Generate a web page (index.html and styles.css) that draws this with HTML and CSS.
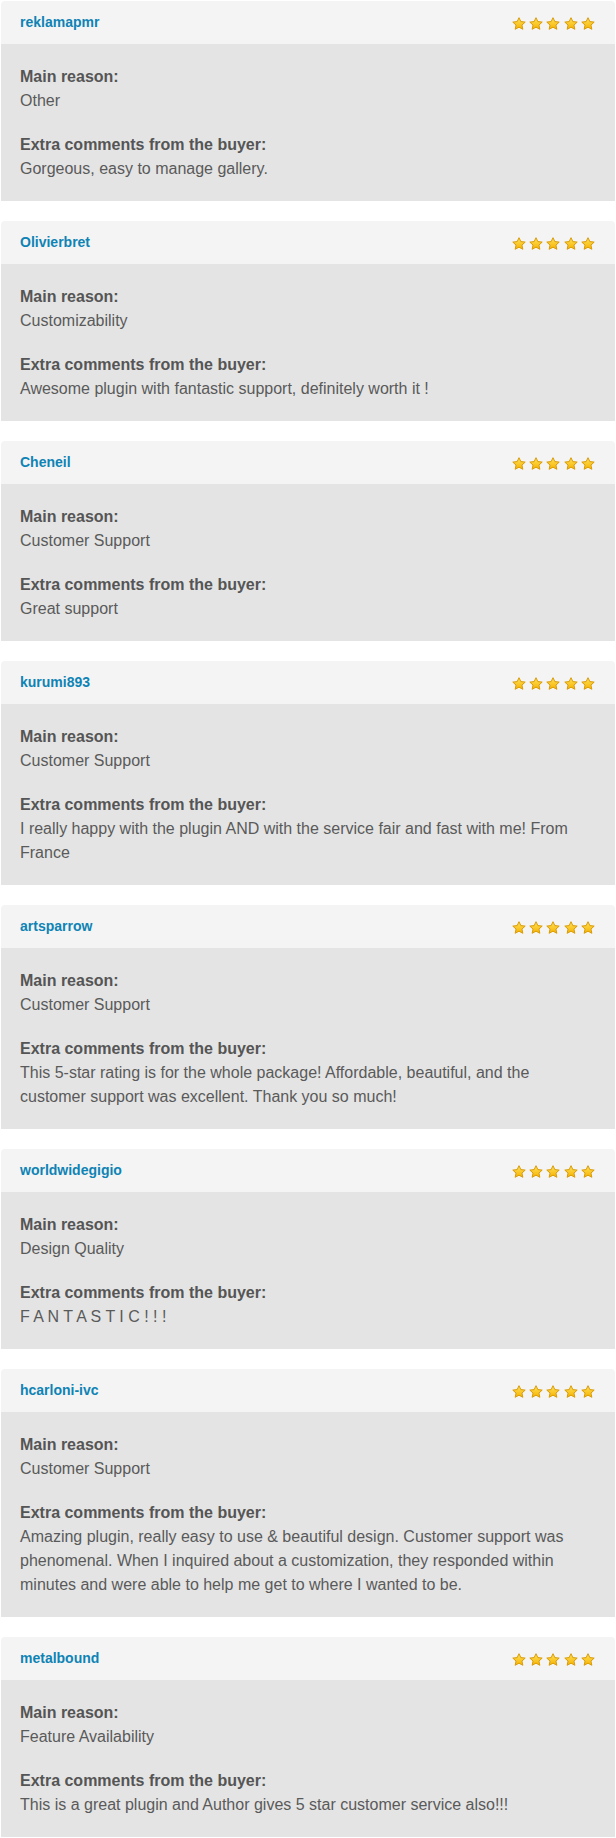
FILE: index.html
```html
<!DOCTYPE html>
<html lang="en">
<head>
<meta charset="utf-8">
<title>Reviews</title>
<link rel="stylesheet" href="styles.css">
</head>
<body>
<svg class="defs" width="0" height="0" aria-hidden="true">
  <defs>
    <linearGradient id="starFill" x1="0" y1="0" x2="0" y2="1">
      <stop offset="0" stop-color="#ffe25c"/>
      <stop offset="1" stop-color="#f6b200"/>
    </linearGradient>
    <symbol id="star" viewBox="0 0 14 13">
      <polygon points="7,0.7 8.85,4.6 13.2,5.1 9.95,8.05 10.85,12.3 7,10.15 3.15,12.3 4.05,8.05 0.8,5.1 5.15,4.6" fill="url(#starFill)" stroke="#d99b07" stroke-width="1" stroke-linejoin="round"/>
    </symbol>
  </defs>
</svg>

<div class="reviews">

  <article class="review">
    <header class="review-head">
      <a class="buyer">reklamapmr</a>
      <span class="stars"><svg><use href="#star"/></svg><svg><use href="#star"/></svg><svg><use href="#star"/></svg><svg><use href="#star"/></svg><svg><use href="#star"/></svg></span>
    </header>
    <div class="review-body">
      <div class="field"><div class="label">Main reason:</div><div class="value">Other</div></div>
      <div class="field"><div class="label">Extra comments from the buyer:</div><div class="value">Gorgeous, easy to manage gallery.</div></div>
    </div>
  </article>

  <article class="review">
    <header class="review-head">
      <a class="buyer">Olivierbret</a>
      <span class="stars"><svg><use href="#star"/></svg><svg><use href="#star"/></svg><svg><use href="#star"/></svg><svg><use href="#star"/></svg><svg><use href="#star"/></svg></span>
    </header>
    <div class="review-body">
      <div class="field"><div class="label">Main reason:</div><div class="value">Customizability</div></div>
      <div class="field"><div class="label">Extra comments from the buyer:</div><div class="value">Awesome plugin with fantastic support, definitely worth it !</div></div>
    </div>
  </article>

  <article class="review">
    <header class="review-head">
      <a class="buyer">Cheneil</a>
      <span class="stars"><svg><use href="#star"/></svg><svg><use href="#star"/></svg><svg><use href="#star"/></svg><svg><use href="#star"/></svg><svg><use href="#star"/></svg></span>
    </header>
    <div class="review-body">
      <div class="field"><div class="label">Main reason:</div><div class="value">Customer Support</div></div>
      <div class="field"><div class="label">Extra comments from the buyer:</div><div class="value">Great support</div></div>
    </div>
  </article>

  <article class="review">
    <header class="review-head">
      <a class="buyer">kurumi893</a>
      <span class="stars"><svg><use href="#star"/></svg><svg><use href="#star"/></svg><svg><use href="#star"/></svg><svg><use href="#star"/></svg><svg><use href="#star"/></svg></span>
    </header>
    <div class="review-body">
      <div class="field"><div class="label">Main reason:</div><div class="value">Customer Support</div></div>
      <div class="field"><div class="label">Extra comments from the buyer:</div><div class="value">I really happy with the plugin AND with the service fair and fast with me! From France</div></div>
    </div>
  </article>

  <article class="review">
    <header class="review-head">
      <a class="buyer">artsparrow</a>
      <span class="stars"><svg><use href="#star"/></svg><svg><use href="#star"/></svg><svg><use href="#star"/></svg><svg><use href="#star"/></svg><svg><use href="#star"/></svg></span>
    </header>
    <div class="review-body">
      <div class="field"><div class="label">Main reason:</div><div class="value">Customer Support</div></div>
      <div class="field"><div class="label">Extra comments from the buyer:</div><div class="value">This 5-star rating is for the whole package! Affordable, beautiful, and the customer support was excellent. Thank you so much!</div></div>
    </div>
  </article>

  <article class="review">
    <header class="review-head">
      <a class="buyer">worldwidegigio</a>
      <span class="stars"><svg><use href="#star"/></svg><svg><use href="#star"/></svg><svg><use href="#star"/></svg><svg><use href="#star"/></svg><svg><use href="#star"/></svg></span>
    </header>
    <div class="review-body">
      <div class="field"><div class="label">Main reason:</div><div class="value">Design Quality</div></div>
      <div class="field"><div class="label">Extra comments from the buyer:</div><div class="value">F A N T A S T I C ! ! !</div></div>
    </div>
  </article>

  <article class="review">
    <header class="review-head">
      <a class="buyer">hcarloni-ivc</a>
      <span class="stars"><svg><use href="#star"/></svg><svg><use href="#star"/></svg><svg><use href="#star"/></svg><svg><use href="#star"/></svg><svg><use href="#star"/></svg></span>
    </header>
    <div class="review-body">
      <div class="field"><div class="label">Main reason:</div><div class="value">Customer Support</div></div>
      <div class="field"><div class="label">Extra comments from the buyer:</div><div class="value">Amazing plugin, really easy to use &amp; beautiful design. Customer support was phenomenal. When I inquired about a customization, they responded within minutes and were able to help me get to where I wanted to be.</div></div>
    </div>
  </article>

  <article class="review">
    <header class="review-head">
      <a class="buyer">metalbound</a>
      <span class="stars"><svg><use href="#star"/></svg><svg><use href="#star"/></svg><svg><use href="#star"/></svg><svg><use href="#star"/></svg><svg><use href="#star"/></svg></span>
    </header>
    <div class="review-body">
      <div class="field"><div class="label">Main reason:</div><div class="value">Feature Availability</div></div>
      <div class="field"><div class="label">Extra comments from the buyer:</div><div class="value">This is a great plugin and Author gives 5 star customer service also!!!</div></div>
    </div>
  </article>

</div>
</body>
</html>
```

FILE: styles.css
```css
html, body {
  margin: 0;
  padding: 0;
  background: #ffffff;
}

body {
  font-family: "Liberation Sans", Arial, Helvetica, sans-serif;
  color: #555555;
}

.defs {
  position: absolute;
  width: 0;
  height: 0;
  overflow: hidden;
}

.reviews {
  display: flex;
  flex-direction: column;
  gap: 20px;
  padding: 1px 1px 0 1px;
}

.review {
  display: flex;
  flex-direction: column;
}

.review-head {
  display: flex;
  align-items: center;
  justify-content: space-between;
  height: 43px;
  padding: 0 20px 0 19px;
  background: #f4f4f4;
  border-radius: 4px 4px 0 0;
}

.buyer {
  font-size: 14px;
  font-weight: bold;
  color: #0e83b5;
  text-decoration: none;
  line-height: 16px;
  margin-top: -2px;
}

.stars {
  display: flex;
  gap: 3.3px;
  margin-top: 1px;
}

.stars svg {
  display: block;
  width: 14px;
  height: 13px;
}

.review-body {
  display: flex;
  flex-direction: column;
  gap: 20px;
  padding: 21px 20px 20px 19px;
  background: #e4e4e4;
  font-size: 16px;
  line-height: 24px;
}

.label {
  font-weight: bold;
  color: #555555;
}

.value {
  color: #5a5a5a;
}
```
